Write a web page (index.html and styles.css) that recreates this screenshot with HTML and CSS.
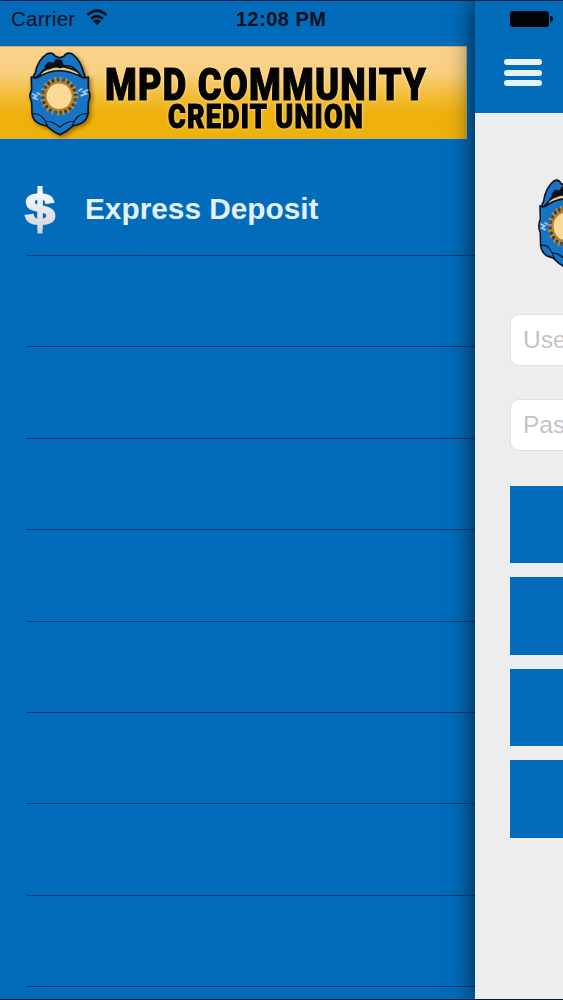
FILE: index.html
```html
<!DOCTYPE html>
<html lang="en">
<head>
  <meta charset="UTF-8">
  <meta name="viewport" content="width=device-width, initial-scale=1.0">
  <link rel="stylesheet" href="styles.css">
  <title>MPD Community Credit Union</title>
</head>
<body>
  <svg class="defs" width="0" height="0">
    <defs>
      <linearGradient id="silver" x1="0" y1="0" x2="0" y2="1">
        <stop offset="0" stop-color="#fff"/>
        <stop offset="1" stop-color="#cfd2d8"/>
      </linearGradient>
      <symbol id="badge" viewBox="24 18 190 254" preserveAspectRatio="none">
        <g stroke="#08141f" stroke-width="5" stroke-linejoin="round">
          <path fill="#e9c887" d="M60 84 Q116 44 180 84 L176 100 L60 100Z"/>
          <path fill="#1774c4" d="M42 102 Q38 92 46 84 Q52 46 82 26 Q98 20 106 34 L120 38 L132 34 Q140 20 156 26 Q184 46 192 84 Q198 92 194 102 L180 88 Q166 66 146 62 L112 62 Q78 60 60 88Z"/>
          <path fill="#1774c4" d="M34 96 Q48 102 62 92 Q118 62 178 92 Q192 102 206 96 L206 134 Q215 152 206 170 L205 206 Q200 228 180 236 L160 242 L142 256 L120 268 L98 256 L80 242 L60 236 Q40 228 36 206 L35 170 Q25 152 35 134Z"/>
          <path fill="none" stroke-width="3.5" d="M38 206 Q62 202 76 228 Q98 226 120 246 Q142 226 164 228 Q178 202 203 206 M76 228 L84 244 M164 228 L156 244"/>
        </g>
        <path fill="#0a1119" d="M72 66 L84 50 L101 53 L108 42 L126 44 L132 62 L122 70 L104 64 L88 73Z"/>
        <path fill="none" stroke="#a6c9ee" stroke-width="5" d="M36 146 l14 6 l-10 6 l14 5 M50 142 l10 6 M206 134 l-16 6 l10 6 l-18 6 M188 130 l-12 8"/>
        <circle cx="118" cy="153" r="44" fill="none" stroke="#4a3416" stroke-width="18" stroke-dasharray="8 3.5"/>
        <circle cx="118" cy="153" r="49" fill="none" stroke="#c08a2c" stroke-width="18" stroke-dasharray="6 9.4"/>
        <circle cx="118" cy="153" r="41" fill="none" stroke="#b77f28" stroke-width="7"/>
        <circle cx="118" cy="153" r="38" fill="#fbd996"/>
      </symbol>
    </defs>
  </svg>

  <div class="app">
    <nav class="menu">
      <div class="status">
        <span class="carrier">Carrier
          <svg class="wifi" viewBox="0 0 22 17">
            <path d="M1.5 6 Q11 -2.5 20.5 6 M5 9.8 Q11 4.6 17 9.8" fill="none" stroke="#02101f" stroke-width="2.8"/>
            <path d="M6.8 11.9 Q11 8.4 15.2 11.9 L11 16Z" fill="#02101f"/>
          </svg>
        </span>
        <span class="time">12:08 PM</span>
      </div>
      <div class="banner">
        <svg class="banner-badge"><use href="#badge"/></svg>
        <svg class="banner-name" viewBox="0 0 340 80">
          <text x="2" y="42.5" font-size="45" textLength="322" lengthAdjust="spacingAndGlyphs">MPD COMMUNITY</text>
          <text x="65" y="70.5" font-size="32.5" textLength="196" lengthAdjust="spacingAndGlyphs">CREDIT UNION</text>
        </svg>
      </div>
      <ul class="items">
        <li>
          <svg class="dollar" viewBox="0 0 34 50">
            <text x="2" y="40" font-size="44" textLength="30" lengthAdjust="spacingAndGlyphs" fill="url(#silver)" stroke="url(#silver)" stroke-width="1.8">$</text>
            <path d="M14.5 1h5v47.5h-5z" fill="url(#silver)"/>
          </svg>
          <span>Express Deposit</span>
        </li>
        <li></li>
        <li></li>
        <li></li>
        <li></li>
        <li></li>
        <li></li>
        <li></li>
        <li></li>
      </ul>
    </nav>

    <main class="panel">
      <header class="bar">
        <div class="battery"></div>
        <div class="burger">
          <i></i>
          <i></i>
          <i></i>
        </div>
      </header>
      <div class="login">
        <svg class="login-badge"><use href="#badge"/></svg>
        <div class="field">Username</div>
        <div class="field">Password</div>
        <div class="buttons">
          <div class="btn"></div>
          <div class="btn"></div>
          <div class="btn"></div>
          <div class="btn"></div>
        </div>
      </div>
    </main>
  </div>
</body>
</html>
```
FILE: styles.css
```css
* {
  box-sizing: border-box;
}

body {
  margin: 0;
  font-family: "Liberation Sans", Arial, sans-serif;
  background-color: #026cbb;
}

.defs {
  display: block;
}

.app {
  display: flex;
  width: 563px;
  height: 1000px;
  overflow: hidden;
  border-top: 1px solid #032448;
  border-bottom: 1px solid #041a33;
}

/* left menu */
.menu {
  width: 475px;
  flex: none;
  background-color: #026cbb;
}

.status {
  display: flex;
  height: 45px;
  padding: 6px 0 0 11px;
  font-size: 20.5px;
  line-height: 24px;
  color: #02101f;
}

.carrier {
  display: flex;
  gap: 11px;
  width: 225px;
  letter-spacing: 0.25px;
}

.wifi {
  width: 22px;
  height: 17px;
  margin-top: 2px;
}

.time {
  font-weight: bold;
  font-size: 20px;
  letter-spacing: 0.45px;
}

.banner {
  display: flex;
  width: 467px;
  height: 93px;
  padding-left: 28px;
  background: linear-gradient(#fbd28c 0%, #f9cf80 28%, #f2bb30 56%, #eeb00c 75%, #efb20c 100%);
  border: 1px solid #c9b36a;
  border-left: none;
}

.banner-badge {
  width: 63px;
  height: 85px;
  margin: 4px 12px 0 0;
  filter: drop-shadow(2px 2px 2px rgba(90, 50, 0, 0.6));
}

.banner-name {
  width: 340px;
  height: 80px;
  margin-top: 10px;
  font-family: Roboto, sans-serif;
  font-weight: 900;
  letter-spacing: 1.5px;
  fill: #050402;
  stroke: #050402;
  stroke-width: 1.2;
  filter: drop-shadow(0 0 1.5px #fdebb8);
}

.items {
  list-style: none;
  margin: 25.6px 0 0;
  padding: 0;
}

.items li {
  display: flex;
  align-items: center;
  height: 91.4px;
  margin-left: 26px;
  border-bottom: 1px solid #03376f;
}

.dollar {
  width: 34px;
  height: 50px;
  margin-left: -3px;
  font-weight: bold;
}

.items span {
  margin: -2px 0 0 28px;
  font-size: 29.8px;
  font-weight: bold;
  color: #e3f0fb;
}

/* sliding panel */
.panel {
  position: relative;
  width: 88px;
  flex: none;
  background-color: #eeedee;
  box-shadow: 0 0 24px rgba(0, 8, 20, 0.85);
}

.bar {
  height: 112px;
  padding: 10px 0 0 29px;
  background-color: #026cbb;
}

.battery {
  display: flex;
  align-items: center;
  width: 46px;
  height: 16px;
  margin-left: 6px;
}

.battery::before {
  content: "";
  width: 39px;
  height: 16px;
  border-radius: 3px;
  background-color: #010409;
}

.battery::after {
  content: "";
  width: 3px;
  height: 6px;
  margin-left: 1px;
  border-radius: 0 3px 3px 0;
  background-color: #010f20;
}

.burger {
  display: grid;
  gap: 4.5px;
  width: 38px;
  margin-top: 32px;
}

.burger i {
  height: 6px;
  border-radius: 3px;
  background-color: #e6f2fc;
}

.login {
  display: flex;
  flex-direction: column;
  width: 88px;
  padding: 65px 0 0 35px;
  overflow: hidden;
}

.login-badge {
  width: 56px;
  height: 91px;
  margin: 0 0 45px 27px;
  flex: none;
}

.field {
  width: 300px;
  height: 52px;
  margin-bottom: 32.5px;
  padding-left: 12px;
  border: 1px solid #e0e0e2;
  border-radius: 9px;
  background-color: #fff;
  font-size: 24.5px;
  line-height: 49px;
  color: #c3c3c8;
}

.buttons {
  display: grid;
  gap: 14px;
  width: 300px;
  margin-top: 3px;
}

.btn {
  height: 77.4px;
  background-color: #026cbb;
}
```
